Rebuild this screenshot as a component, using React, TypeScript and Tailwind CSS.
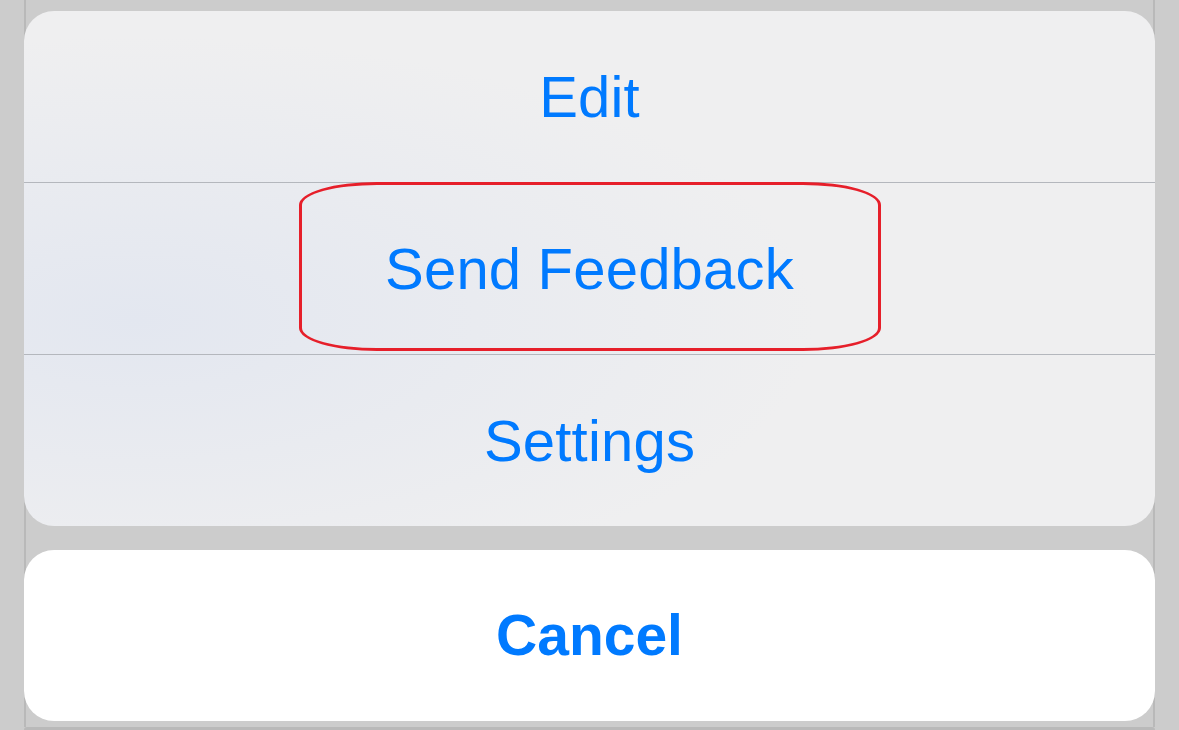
const rows = ["Edit", "Send Feedback", "Settings"]

export default function App() {
  return (
    <div className="h-[730px] w-full overflow-hidden bg-[#cccccc] px-6 font-['Liberation_Sans',Arial,sans-serif]">
      <div className="flex h-[727px] flex-col gap-6 pt-[11px] shadow-[inset_2px_0_0_#b9b9b9,inset_-2px_0_0_#b9b9b9]">
        <div className="relative flex flex-col overflow-hidden rounded-[30px] bg-[#efeff0] bg-[radial-gradient(ellipse_60%_55%_at_10%_60%,#e3e7f0_0%,rgba(227,231,240,0)_100%)]">
          {rows.map((label, i) => (
            <div
              key={label}
              className={
                i === 0
                  ? "flex h-[171px] items-center justify-center"
                  : "flex h-[172px] items-center justify-center border-t border-[#b4b7bd]"
              }
            >
              <span className="text-[58px] leading-none tracking-[0.2px] text-[#007aff]">{label}</span>
            </div>
          ))}
          {/* red annotation round "Send Feedback" */}
          <div className="pointer-events-none absolute left-[275px] top-[171px] h-[169px] w-[582px] rounded-[78px/23px] border-[3px] border-[#e61f2a]" />
        </div>

        <div className="flex h-[171px] items-center justify-center rounded-[30px] bg-white">
          <span className="text-[57px] font-bold leading-none text-[#007aff]">Cancel</span>
        </div>
      </div>
      <div className="h-[3px] rounded-t-[10px] bg-[#b9b9b9]" />
    </div>
  )
}
